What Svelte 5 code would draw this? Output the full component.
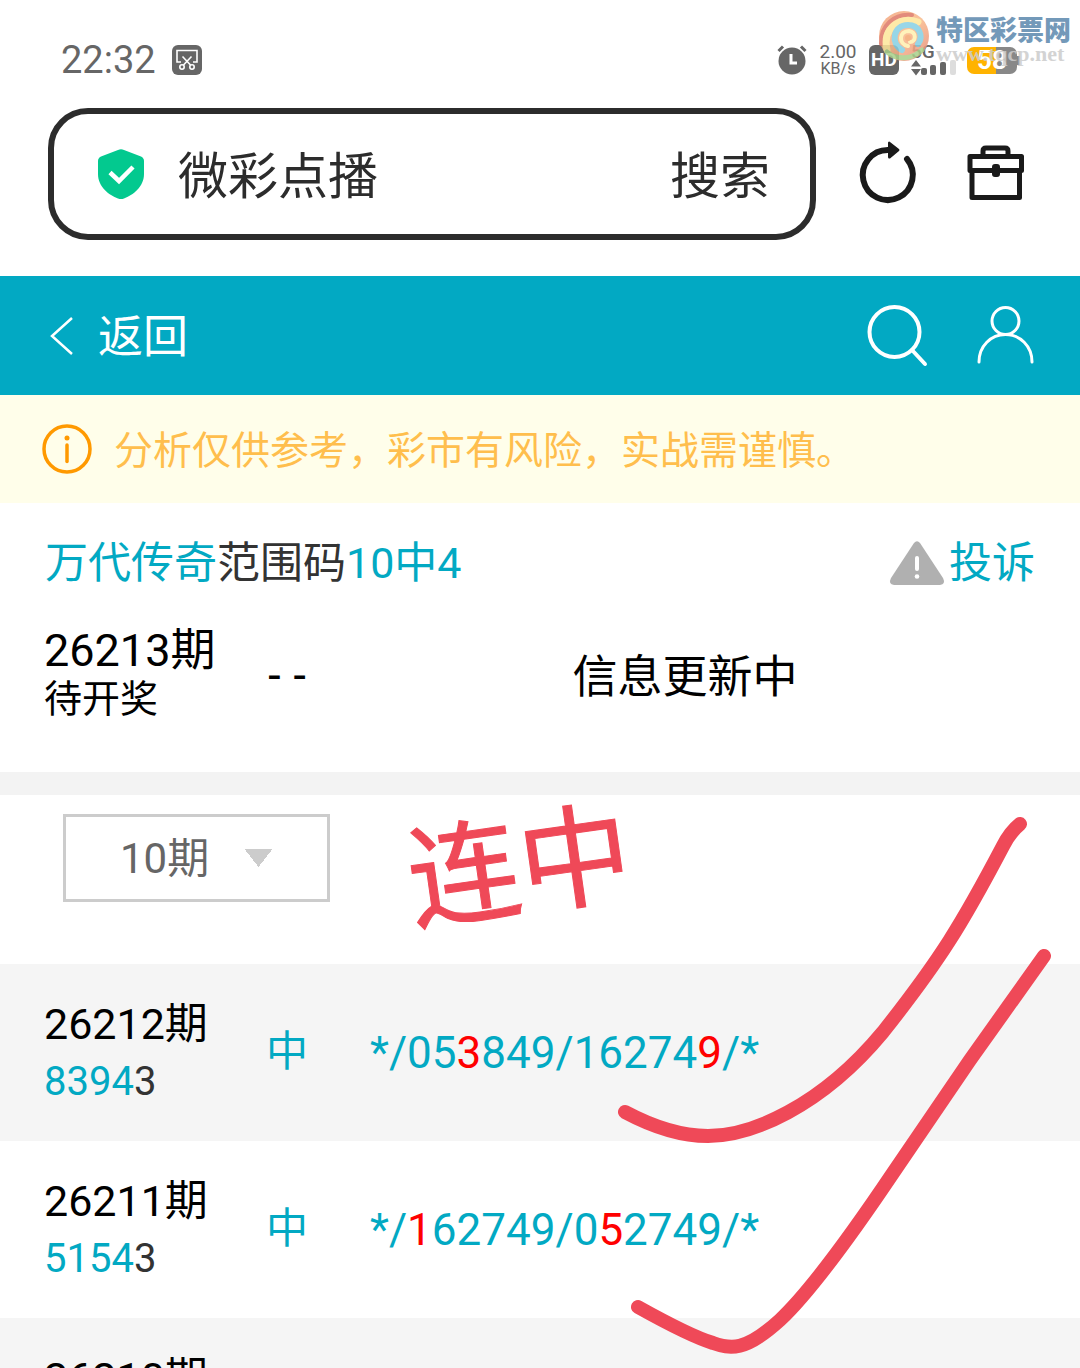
<script>
	let keyword = '微彩点播';
	let range = '10';

	const title = [
		{ text: '万代传奇', hot: true },
		{ text: '范围码', hot: false },
		{ text: '10中4', hot: true }
	];

	// wrap the winning digit in [ ] and it is drawn red
	const rows = [
		{ issue: '26212', drawn: '8394', last: '3', result: '中', code: '*/05[3]849/16274[9]/*' },
		{ issue: '26211', drawn: '5154', last: '3', result: '中', code: '*/[1]62749/0[5]2749/*' },
		{ issue: '26210', drawn: '', last: '', result: '', code: '' }
	];

	function split(code) {
		return code.split(/[\[\]]/).map((text, i) => ({ text, hit: i % 2 === 1 }));
	}
</script>

<div class="page">
	<div class="status">
		<span class="time">22:32</span>
		<svg class="snip" viewBox="0 0 30 30">
			<rect width="30" height="30" rx="6" fill="#666" />
			<g fill="none" stroke="#fff" stroke-width="1.6">
				<path d="M9 17H5V5.500H25V17H21M10.500 11.500L18.500 20M19.500 11.500L11.500 20" />
				<circle cx="10" cy="22" r="2.200" />
				<circle cx="20" cy="22" r="2.200" />
			</g>
		</svg>
		<div class="signals">
			<svg class="alarm" viewBox="0 0 30 30">
				<circle cx="15" cy="16" r="13.500" fill="#666" />
				<path d="M1.500 6L6 1.500M28.500 6L24 1.500" stroke="#666" stroke-width="3" />
				<path d="M14 9V18H20" fill="none" stroke="#fff" stroke-width="3" />
			</svg>
			<div class="speed"><span class="rate">2.00</span><span>KB/s</span></div>
			<span class="hd">HD</span>
			<div class="net">
				<span>5G</span>
				<svg viewBox="0 0 46 16">
					<path d="M0 6.500L5 0L10 6.500ZM0 9L5 15.500L10 9Z" fill="#666" />
					<g fill="#666">
						<rect x="10" y="8" width="6" height="7" rx="2" />
						<rect x="19" y="5" width="6" height="10" rx="2" />
						<rect x="29" y="2" width="6" height="13" rx="2" />
					</g>
					<rect x="39" y="0" width="6" height="15" rx="2" fill="#ddd" />
				</svg>
			</div>
			<span class="battery">58</span>
		</div>
	</div>

	<div class="browser">
		<form class="address" on:submit|preventDefault>
			<svg class="shield" viewBox="0 0 46 50">
				<path d="M20 1Q23 -0.500 26 1L43 7.500Q46 9 46 12V25C46 38 35 46 26 49.500Q23 50.500 20 49.500C11 46 0 38 0 25V12Q0 9 3 7.500Z" fill="#03c98f" />
				<path d="M12 23.500L21 32L35 18" fill="none" stroke="#fff" stroke-width="4.500" />
			</svg>
			<input type="text" aria-label="地址" bind:value={keyword} />
			<button class="go">搜索</button>
		</form>
		<button class="tool" aria-label="刷新">
			<svg viewBox="0 0 60 60">
				<path d="M49 15A25 25 0 1 1 30 6" fill="none" stroke="#1a1a1a" stroke-width="6" stroke-linecap="round" />
				<path d="M30 -1.500Q31 -3 32 -2L41 5Q42 6 41 7L32 14.500Q30 15 30 13Z" fill="#1a1a1a" />
			</svg>
		</button>
		<button class="tool" aria-label="工具箱">
			<svg viewBox="0 0 60 60" fill="none" stroke="#1a1a1a" stroke-width="5" stroke-linejoin="round">
				<path d="M17 13V7Q17 4 20 4H39Q42 4 42 7V13" />
				<path d="M4 12.500H55.500V26.500H4Z" />
				<path d="M6 26.500V53.500H53.500V26.500" />
				<rect x="28" y="22" width="4" height="9" rx="1" fill="#1a1a1a" stroke-width="4" />
			</svg>
		</button>
	</div>

	<header>
		<a class="back" href="#back">
			<svg viewBox="0 0 24 38"><path d="M22 1L2 19L22 37" fill="none" stroke="#fff" stroke-width="2.500" /></svg>
			<span>返回</span>
		</a>
		<button class="nav" aria-label="查找">
			<svg viewBox="0 0 64 64" fill="none" stroke="#fff" stroke-width="4" stroke-linecap="round">
				<circle cx="28.500" cy="28" r="25" />
				<path d="M46 46L59 60" />
			</svg>
		</button>
		<button class="nav" aria-label="我的">
			<svg viewBox="0 0 64 64" fill="none" stroke="#fff" stroke-width="3" stroke-linecap="round">
				<circle cx="31.500" cy="17" r="13.500" />
				<path d="M5 58C5 42 17 30.500 31.500 30.500S58 42 58 58" />
			</svg>
		</button>
	</header>

	<p class="notice">
		<svg viewBox="0 0 50 50" fill="none" stroke="#ff9900">
			<circle cx="25" cy="25" r="23" stroke-width="3.500" />
			<path d="M25 21V37.500" stroke-width="3.500" stroke-linecap="round" />
			<circle cx="25" cy="14" r="2.500" fill="#ff9900" stroke="none" />
		</svg>
		<span>分析仅供参考，彩市有风险，实战需谨慎。</span>
	</p>

	<section class="plan">
		<div class="plan-head">
			<h1>{#each title as part}<span class:hot={part.hot}>{part.text}</span>{/each}</h1>
			<a class="report" href="#report">
				<svg viewBox="0 0 54 44">
					<path d="M24 2Q27 -1.500 30 2L53 37Q56 43 50 44H4Q-2 43 1 37Z" fill="#b0b0b0" />
					<path d="M27 17V28" stroke="#fff" stroke-width="4" stroke-linecap="round" />
					<circle cx="27" cy="35.500" r="2.300" fill="#fff" />
				</svg>
				投诉
			</a>
		</div>
		<table class="latest">
			<tbody>
				<tr>
					<td class="issue"><div>26213期</div><div class="wait">待开奖</div></td>
					<td class="result dash">--</td>
					<td class="info">信息更新中</td>
				</tr>
			</tbody>
		</table>
	</section>

	<div class="filter">
		<select aria-label="期数" bind:value={range}>
			<option value="10">10期</option>
			<option value="20">20期</option>
			<option value="30">30期</option>
		</select>
	</div>

	<table class="history">
		<tbody>
			{#each rows as row}
				<tr>
					<td class="issue">
						<div>{row.issue}期</div>
						<div class="drawn"><span class="hot">{row.drawn}</span>{row.last}</div>
					</td>
					<td class="result">{row.result}</td>
					<td class="code">{#each split(row.code) as part}<span class:hit={part.hit}>{part.text}</span>{/each}</td>
				</tr>
			{/each}
		</tbody>
	</table>

	<!-- hand drawn marks over the list -->
	<svg class="marks" viewBox="0 0 1080 1368">
		<text transform="translate(414 922) rotate(-8)">连中</text>
		<path d="M1020 824Q1010 832 1003 846C962 924 940 960 883 1032C820 1108 750 1136 708 1136Q670 1136 625 1112" />
		<path d="M1044 956L970 1060L893 1173C860 1222 812 1290 780 1320C745 1352 730 1349 713 1343Q690 1336 638 1307" />
	</svg>

	<div class="watermark">
		<svg viewBox="0 0 52 52">
			<defs>
				<linearGradient id="ball" x1="0" y1="0" x2="1" y2="1">
					<stop offset="0" stop-color="#f2a27c" />
					<stop offset="0.5" stop-color="#f9b98a" />
					<stop offset="1" stop-color="#e58878" />
				</linearGradient>
			</defs>
			<circle cx="26" cy="26" r="25" fill="url(#ball)" />
			<g fill="none" stroke-linecap="round">
				<path d="M3 34C2 16 16 3 34 5" stroke="#dd7766" stroke-width="4" />
				<path d="M9 40C4 18 22 6 40 12" stroke="#fde79a" stroke-width="7" />
				<path d="M9 42C18 50 34 50 44 40" stroke="#a9cf8a" stroke-width="5" />
				<path d="M24 40C12 34 15 15 30 15C41 15 46 26 40 34" stroke="#86cfe3" stroke-width="6" />
				<path d="M30 36C20 34 21 21 31 21C39 22 38 32 32 32" stroke="#fff0b0" stroke-width="4" />
			</g>
			<circle cx="30" cy="28" r="3" fill="#f4a872" />
		</svg>
		<div>
			<div class="brand">特区彩票网</div>
			<div class="site">www.tqcp.net</div>
		</div>
	</div>
</div>

<style>
	:global(body) {
		background: #fff;
	}

	.page {
		position: relative;
		height: 100vh;
		overflow: hidden;
		font-family: Roboto, 'Noto Sans CJK SC', sans-serif;
		color: #000;
	}

	svg {
		display: block;
		flex: none;
		overflow: visible;
	}

	button,
	input,
	select {
		padding: 0;
		border: 0;
		background: none;
		font: inherit;
		color: inherit;
	}

	a {
		text-decoration: none;
	}

	.status {
		display: flex;
		align-items: center;
		height: 48px;
		padding: 36px 63px 0 61px;
		color: #666;
	}

	.time {
		font-size: 38px;
	}

	.snip {
		width: 30px;
		height: 30px;
		margin-left: 16px;
	}

	.signals {
		display: flex;
		align-items: center;
		gap: 12px;
		margin-left: auto;
	}

	.alarm {
		width: 30px;
		height: 30px;
	}

	.speed {
		display: flex;
		flex-direction: column;
		width: 38px;
		font-size: 16px;
		line-height: 17px;
		text-align: center;
	}

	.rate {
		font-size: 19px;
	}

	.hd {
		width: 30px;
		border-radius: 6px;
		background: #666;
		color: #fff;
		font-size: 19px;
		font-weight: 700;
		line-height: 30px;
		text-align: center;
	}

	.net {
		width: 44px;
		font-size: 19px;
		font-weight: 500;
		line-height: 16px;
	}

	.net svg {
		width: 46px;
		height: 16px;
	}

	.battery {
		position: relative;
		width: 50px;
		border-radius: 7px;
		background: linear-gradient(90deg, #ffb300 58%, #888 58%);
		color: #fff;
		font-size: 26px;
		font-weight: 700;
		line-height: 27px;
		text-align: center;
	}

	.battery::after {
		content: '';
		position: absolute;
		top: 9px;
		right: -3px;
		width: 3px;
		height: 9px;
		background: #888;
	}

	.browser {
		display: flex;
		align-items: center;
		gap: 48px;
		padding: 24px 54px 36px 48px;
	}

	.address {
		display: flex;
		flex: 1;
		align-items: center;
		min-width: 0;
		height: 120px;
		margin-right: -6px;
		padding: 0 40px 0 44px;
		border: 6px solid #2c2c2c;
		border-radius: 40px;
		color: #2c2c2c;
		font-size: 50px;
	}

	.shield {
		width: 46px;
		height: 50px;
		margin-right: 34px;
	}

	.address input {
		flex: 1;
		min-width: 0;
	}

	.tool svg {
		width: 60px;
		height: 60px;
	}

	header {
		display: flex;
		align-items: center;
		gap: 44px;
		height: 119px;
		padding: 0 42px 0 50px;
		background: #02a9c3;
	}

	.back {
		display: flex;
		align-items: center;
		gap: 24px;
		margin-right: auto;
		color: #fff;
		font-size: 45px;
	}

	.back span,
	.notice span,
	.go {
		padding-bottom: 5px;
	}

	.back svg {
		width: 24px;
		height: 38px;
	}

	.nav svg {
		width: 64px;
		height: 64px;
	}

	.notice {
		display: flex;
		align-items: center;
		gap: 22px;
		height: 108px;
		margin: 0;
		padding: 0 42px;
		background: #fffeea;
		color: #ffbe4d;
		font-size: 39px;
	}

	.notice svg {
		width: 50px;
		height: 50px;
	}

	.address input {
		padding-bottom: 5px;
	}

	.plan {
		padding: 28px 0 49px;
		border-bottom: 23px solid #f3f3f3;
	}

	.plan-head {
		display: flex;
		align-items: center;
		justify-content: space-between;
		padding: 0 45px;
		font-size: 43px;
		line-height: 64px;
	}

	h1 {
		margin: 0;
		color: #333;
		font-size: 43px;
		font-weight: 400;
	}

	.hot,
	.result,
	.code {
		color: #02a9c3;
	}

	.report {
		display: flex;
		align-items: center;
		gap: 5px;
		color: #02a9c3;
	}

	.report svg {
		width: 54px;
		height: 44px;
	}

	table {
		width: 100%;
		border-collapse: collapse;
		table-layout: fixed;
		font-size: 43px;
		line-height: 58px;
	}

	td {
		padding: 0;
	}

	.issue {
		width: 198px;
		padding-left: 44px;
	}

	.result {
		width: 90px;
		font-size: 42px;
		text-align: center;
	}

	.latest {
		margin-top: 32px;
		font-size: 45px;
		line-height: 48px;
	}

	.wait {
		font-size: 38px;
	}

	.dash {
		padding: 0 6px 0 0;
		color: #000;
		font-family: 'DejaVu Sans Mono', monospace;
	}

	.info {
		padding: 6px 48px 0 0;
		text-align: center;
	}

	.filter {
		height: 150px;
		padding: 19px 63px 0;
	}

	select {
		width: 267px;
		height: 88px;
		padding-left: 54px;
		border: 3px solid #ccc;
		border-radius: 0;
		appearance: none;
		background: conic-gradient(from -38deg at 50% 100%, #ccc 76deg, transparent 0) no-repeat 178px 32px / 29px 18px;
		color: #666;
		font-size: 42px;
	}

	.history tr {
		height: 177px;
	}

	.history tr:nth-child(odd) {
		background: #f5f5f5;
	}

	.history .result {
		padding-bottom: 2px;
	}

	.drawn {
		min-height: 58px;
		color: #333;
		font-size: 40px;
	}

	.code {
		padding-left: 38px;
		font-size: 44px;
	}

	.hit {
		color: #f00;
	}

	.marks {
		position: absolute;
		top: 0;
		left: 0;
		width: 100%;
		pointer-events: none;
	}

	.marks text {
		fill: #ef4958;
		stroke: #ef4958;
		stroke-width: 1;
		font-size: 112px;
	}

	.marks path {
		fill: none;
		stroke: #ef4958;
		stroke-width: 14;
		stroke-linecap: round;
	}

	.watermark {
		position: absolute;
		top: 10px;
		right: 9px;
		display: flex;
		gap: 6px;
		opacity: 0.85;
	}

	.watermark svg {
		width: 52px;
		height: 52px;
	}

	.brand {
		height: 34px;
		color: #5b88ad;
		font-size: 27px;
		font-weight: 900;
		line-height: 42px;
	}

	.site {
		color: #ccc;
		font-family: 'Liberation Serif', serif;
		font-size: 22px;
		font-weight: 700;
		line-height: 20px;
	}
</style>
